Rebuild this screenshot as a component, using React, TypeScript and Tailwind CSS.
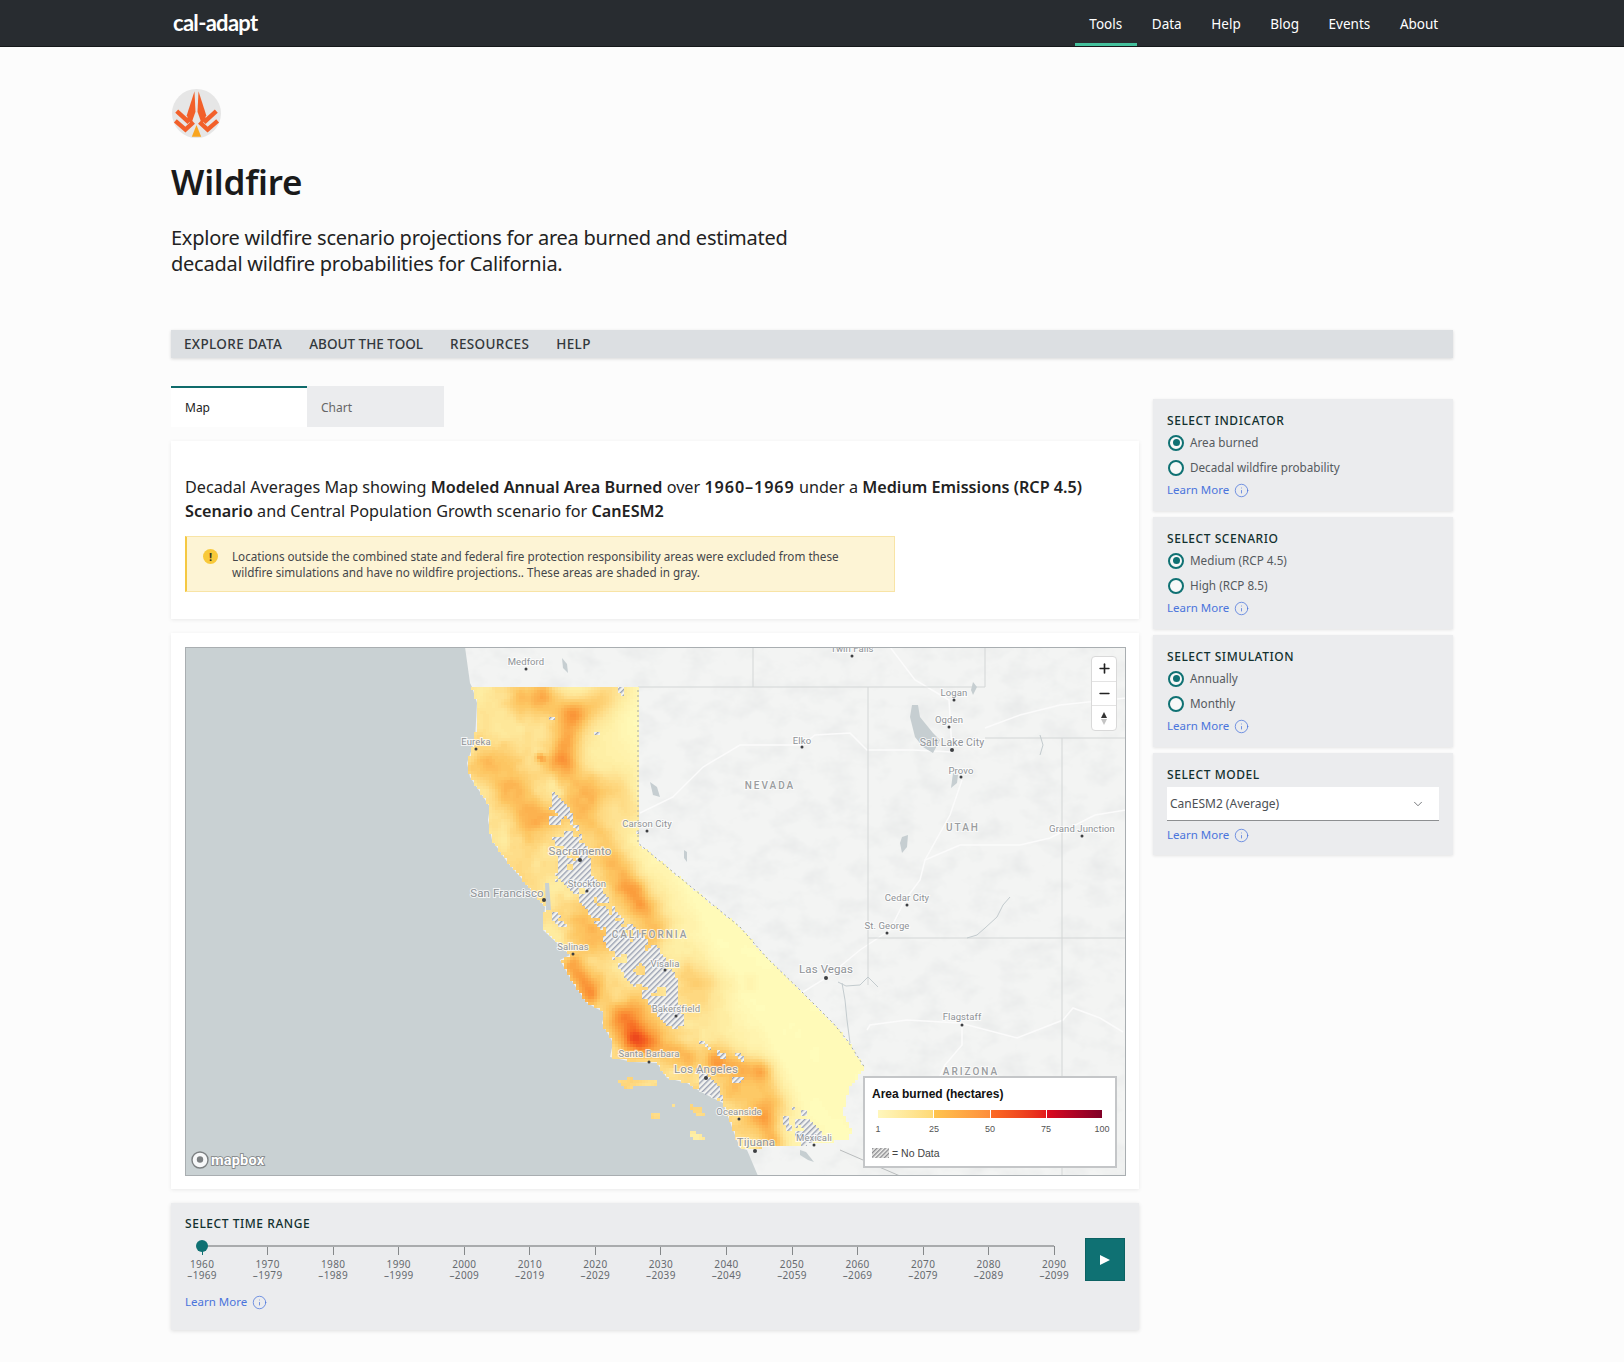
import { ChevronDown, Info, Minus, Plus } from "lucide-react";

type Pt = [number, number];

const californiaShape: Pt[] = [
  [472, 687], [638, 687], [638, 843], [667, 867], [707, 900], [740, 927], [767, 958], [800, 990], [833, 1023],
  [847, 1040], [865, 1068], [850, 1087], [843, 1113], [852, 1130], [847, 1140], [783, 1147], [740, 1148],
  [733, 1130], [723, 1103], [703, 1093], [687, 1083], [667, 1078], [657, 1063], [633, 1062], [610, 1057],
  [613, 1043], [602, 1023], [605, 1013], [587, 1003], [573, 983], [560, 960], [570, 955], [543, 930],
  [545, 907], [523, 880], [508, 863], [492, 840], [488, 820], [490, 807], [470, 777], [467, 763], [475, 740],
  [477, 703],
];

const islands: Pt[][] = [
  [[618, 1080], [630, 1078], [640, 1080], [657, 1079], [657, 1086], [635, 1086], [632, 1089], [625, 1089], [622, 1084], [618, 1084]],
  [[652, 1113], [660, 1113], [660, 1119], [652, 1119]],
  [[690, 1105], [703, 1108], [704, 1116], [698, 1116], [690, 1110]],
  [[690, 1128], [694, 1132], [704, 1137], [703, 1141], [696, 1141], [690, 1134]],
  [[672, 1105], [675, 1105], [675, 1108], [672, 1108]],
];

const hatchAreas: Pt[][] = [
  [
    [553, 790], [548, 827], [556, 845], [558, 868], [554, 880], [570, 888], [583, 905], [598, 927], [606, 947],
    [625, 977], [645, 1000], [665, 1023], [682, 1034], [686, 1023], [678, 1000], [678, 980], [660, 950],
    [645, 937], [622, 917], [610, 903], [604, 892], [590, 873], [592, 860], [578, 827], [566, 803],
  ],
  [[618, 687], [623, 687], [623, 697], [618, 697]],
  [[549, 716], [555, 716], [555, 721], [549, 721]],
  [[593, 727], [600, 727], [600, 734], [593, 734]],
  [[635, 830], [640, 830], [640, 843], [635, 843]],
  [[552, 910], [560, 915], [569, 928], [560, 928], [552, 920]],
  [[697, 1068], [712, 1078], [722, 1092], [722, 1100], [710, 1098], [699, 1090]],
  [[698, 1041], [704, 1041], [727, 1056], [724, 1060], [712, 1052]],
  [[735, 1052], [740, 1052], [746, 1062], [741, 1063]],
  [[725, 1078], [744, 1077], [738, 1084], [728, 1084]],
  [[783, 1117], [788, 1117], [792, 1130], [786, 1133]],
  [[795, 1120], [810, 1120], [823, 1133], [822, 1140], [803, 1146], [795, 1135]],
  [[792, 1106], [800, 1108], [810, 1114], [800, 1116], [792, 1112]],
];

const holes: { x: number; y: number; r: number }[] = [
  { x: 640, y: 970, r: 6 },
  { x: 662, y: 992, r: 5 },
  { x: 566, y: 822, r: 5 },
  { x: 577, y: 835, r: 3 },
  { x: 570, y: 868, r: 3 },
  { x: 625, y: 925, r: 3 },
];

const ridges: { pts: Pt[]; amp: number; r: number }[] = [
  { pts: [[522, 700], [552, 708]], amp: 0.18, r: 15 },
  { pts: [[543, 688], [543, 695]], amp: 0.18, r: 8 },
  { pts: [[597, 703], [612, 690]], amp: 0.2, r: 15 },
  { pts: [[572, 716], [562, 758]], amp: 0.36, r: 11 },
  { pts: [[578, 715], [600, 700]], amp: 0.12, r: 10 },
  { pts: [[540, 757], [542, 759]], amp: 0.3, r: 3 },
  { pts: [[500, 763], [533, 817]], amp: 0.26, r: 14 },
  { pts: [[560, 760], [575, 795]], amp: 0.1, r: 9 },
  { pts: [[600, 730], [625, 770]], amp: 0.08, r: 14 },
  { pts: [[592, 785], [593, 820], [617, 867], [637, 897], [657, 925]], amp: 0.24, r: 12 },
  { pts: [[620, 790], [632, 810]], amp: 0.16, r: 11 },
  { pts: [[637, 890], [640, 903]], amp: 0.18, r: 9 },
  { pts: [[580, 918], [600, 950]], amp: 0.2, r: 14 },
  { pts: [[572, 965], [590, 995]], amp: 0.36, r: 8 },
  { pts: [[625, 1020], [634, 1036]], amp: 0.5, r: 12 },
  { pts: [[635, 1040], [690, 1058]], amp: 0.28, r: 9 },
  { pts: [[690, 980], [705, 985]], amp: 0.2, r: 13 },
  { pts: [[732, 982], [732, 986]], amp: 0.05, r: 6 },
  { pts: [[750, 980], [750, 986]], amp: 0.06, r: 5 },
  { pts: [[717, 1062], [757, 1070]], amp: 0.28, r: 9 },
  { pts: [[765, 1075], [772, 1098]], amp: 0.2, r: 9 },
  { pts: [[735, 1090], [768, 1112]], amp: 0.22, r: 13 },
  { pts: [[762, 1118], [772, 1140]], amp: 0.3, r: 8 },
  { pts: [[640, 1000], [662, 1030]], amp: 0.08, r: 10 },
];

const colorStops: [number, number, number, number][] = [
  [0, 255, 252, 187],
  [0.2, 254, 229, 150],
  [0.4, 253, 198, 98],
  [0.6, 251, 157, 60],
  [0.8, 247, 108, 35],
  [1, 232, 56, 26],
];

function inside(p: Pt, poly: Pt[]) {
  let hit = false;
  for (let i = 0, j = poly.length - 1; i < poly.length; j = i++) {
    const [xi, yi] = poly[i];
    const [xj, yj] = poly[j];
    if (yi > p[1] !== yj > p[1] && p[0] < ((xj - xi) * (p[1] - yi)) / (yj - yi) + xi) hit = !hit;
  }
  return hit;
}

function segDist(p: Pt, a: Pt, b: Pt) {
  const dx = b[0] - a[0];
  const dy = b[1] - a[1];
  const t = Math.max(0, Math.min(1, ((p[0] - a[0]) * dx + (p[1] - a[1]) * dy) / (dx * dx + dy * dy)));
  return Math.hypot(p[0] - a[0] - t * dx, p[1] - a[1] - t * dy);
}

function hash(i: number, j: number) {
  const s = Math.sin(i * 127.1 + j * 311.7) * 43758.5453;
  return s - Math.floor(s);
}

// smooth lattice noise, 0..1
function vnoise(x: number, y: number) {
  const i = Math.floor(x);
  const j = Math.floor(y);
  const fx = x - i;
  const fy = y - j;
  const u = fx * fx * (3 - 2 * fx);
  const v = fy * fy * (3 - 2 * fy);
  const top = hash(i, j) * (1 - u) + hash(i + 1, j) * u;
  const bottom = hash(i, j + 1) * (1 - u) + hash(i + 1, j + 1) * u;
  return top * (1 - v) + bottom * v;
}

function heat(p: Pt) {
  const [x, y] = p;
  const edge = x - (650 + (y - 900) * 0.55);
  const t = Math.max(0, Math.min(1, (edge + 25) / 70));
  const base = 0.23 * (1 - t) + 0.012 * t;
  let v = base;
  for (const r of ridges) {
    let d = Infinity;
    for (let i = 0; i < r.pts.length - 1; i++) d = Math.min(d, segDist(p, r.pts[i], r.pts[i + 1]));
    v += r.amp * Math.exp(-(d * d) / (2 * r.r * r.r));
  }
  const noise = (vnoise(x / 24, y / 24) - 0.5) * 0.22 + (vnoise(x / 8, y / 8) - 0.5) * 0.09;
  return Math.max(0, Math.min(1, v + noise * (1 - t * 0.92)));
}

function colorFor(v: number) {
  for (let i = 1; i < colorStops.length; i++) {
    const a = colorStops[i - 1];
    const b = colorStops[i];
    if (v <= b[0]) {
      const k = (v - a[0]) / (b[0] - a[0]);
      return `rgb(${Math.round(a[1] + (b[1] - a[1]) * k)},${Math.round(a[2] + (b[2] - a[2]) * k)},${Math.round(a[3] + (b[3] - a[3]) * k)})`;
    }
  }
  return "rgb(232,56,26)";
}

function buildHeatmap() {
  const size = 3;
  const groups: Record<string, string> = {};
  let hatch = "";
  const shapes = [californiaShape, ...islands];
  for (let y = 684; y < 1152; y += size) {
    for (let x = 462; x < 870; x += size) {
      const p: Pt = [x + size / 2, y + size / 2];
      if (!shapes.some((s) => inside(p, s))) continue;
      const cell = `M${x} ${y}h${size}v${size}h-${size}z`;
      const hole = holes.some((h) => Math.hypot(p[0] - h.x, p[1] - h.y) < h.r) || vnoise(x / 7, y / 7) > 0.76;
      if (!hole && hatchAreas.some((s) => inside(p, s))) {
        hatch += cell;
        continue;
      }
      const level = Math.round(heat(p) * 60) / 60;
      const fill = colorFor(level);
      groups[fill] = (groups[fill] || "") + cell;
    }
  }
  return { groups: Object.entries(groups), hatch };
}

const heatmap = buildHeatmap();

const waterShape =
  "M185 647H465L470 683L472 687L477 703L475 740L467 763L470 777L490 807L488 820L492 840L508 863L523 880L545 907L543 930L570 955L560 960L573 983L587 1003L605 1013L602 1023L613 1043L610 1057L633 1062L657 1063L667 1078L687 1083L703 1093L723 1103L733 1130L740 1148L747 1150L758 1176H185Z";

const cityLabels: { name: string; x: number; y: number; dotX?: number; dotY?: number; size?: number; big?: boolean }[] = [
  { name: "Medford", x: 526, y: 665, dotY: 669 },
  { name: "Twin Falls", x: 852, y: 652, dotY: 656 },
  { name: "Logan", x: 954, y: 696, dotY: 700 },
  { name: "Ogden", x: 949, y: 723, dotY: 727 },
  { name: "Salt Lake City", x: 952, y: 746, dotY: 750, size: 10.5, big: true },
  { name: "Provo", x: 961, y: 774, dotY: 777 },
  { name: "Elko", x: 802, y: 744, dotY: 747 },
  { name: "Eureka", x: 476, y: 745, dotY: 749 },
  { name: "Grand Junction", x: 1082, y: 832, dotY: 836 },
  { name: "Carson City", x: 647, y: 827, dotY: 831 },
  { name: "Cedar City", x: 907, y: 901, dotY: 905 },
  { name: "St. George", x: 887, y: 929, dotY: 933 },
  { name: "Sacramento", x: 580, y: 855, dotY: 860, size: 11.5, big: true },
  { name: "Stockton", x: 587, y: 887, dotY: 891 },
  { name: "San Francisco", x: 507, y: 897, dotX: 544, dotY: 900, size: 11.5, big: true },
  { name: "Salinas", x: 573, y: 950, dotY: 954 },
  { name: "Visalia", x: 665, y: 967, dotY: 970 },
  { name: "Las Vegas", x: 826, y: 973, dotY: 978, size: 11.5, big: true },
  { name: "Bakersfield", x: 676, y: 1012, dotY: 1016 },
  { name: "Flagstaff", x: 962, y: 1020, dotY: 1025 },
  { name: "Santa Barbara", x: 649, y: 1057, dotY: 1062 },
  { name: "Los Angeles", x: 706, y: 1073, dotY: 1078, size: 11.5, big: true },
  { name: "Oceanside", x: 739, y: 1115, dotY: 1119 },
  { name: "Tijuana", x: 756, y: 1146, dotX: 755, dotY: 1151, size: 11.5, big: true },
  { name: "Mexicali", x: 814, y: 1141, dotY: 1145 },
];

const stateLabels: { name: string; x: number; y: number }[] = [
  { name: "NEVADA", x: 770, y: 789 },
  { name: "UTAH", x: 963, y: 831 },
  { name: "CALIFORNIA", x: 650, y: 938 },
  { name: "ARIZONA", x: 971, y: 1075 },
];

const decades = [1960, 1970, 1980, 1990, 2000, 2010, 2020, 2030, 2040, 2050, 2060, 2070, 2080, 2090];

const sections = [
  { title: "SELECT INDICATOR", options: ["Area burned", "Decadal wildfire probability"] },
  { title: "SELECT SCENARIO", options: ["Medium (RCP 4.5)", "High (RCP 8.5)"] },
  { title: "SELECT SIMULATION", options: ["Annually", "Monthly"] },
];

const navItems = ["Tools", "Data", "Help", "Blog", "Events", "About"];

function LearnMore() {
  return (
    <a className="flex items-center gap-[5px] text-[11.5px] leading-[18px] text-[#4a74dc]">
      Learn More
      <Info size={15} strokeWidth={1.2} />
    </a>
  );
}

function Radio({ label, checked }: { label: string; checked?: boolean }) {
  return (
    <label className="flex h-[25px] items-center gap-[6px] pl-[1px]">
      <span className="flex h-[16px] w-[16px] items-center justify-center rounded-full border-2 border-[#0f7173] bg-[#f7f8f8]">
        {checked && <span className="h-[7px] w-[7px] rounded-full bg-[#0f7173]" />}
      </span>
      <span className="text-[11.7px] text-[#555a5e]">{label}</span>
    </label>
  );
}

function PanelTitle({ children }: { children: string }) {
  return <h3 className="text-[12px] leading-[16px] font-medium tracking-[0.55px] text-[#12302e]">{children}</h3>;
}

function WildfireIcon() {
  return (
    <svg viewBox="516 267 146 146" className="ml-[1px] h-[49px] w-[49px]">
      <circle cx="589" cy="340" r="73" fill="#e6e6e6" />
      <path d="M583 274L586 335L572 374L560 345Z" fill="#f2602a" />
      <path d="M595 274L592 335L606 374L618 345Z" fill="#f2602a" />
      <path d="M530 333L562 362L574 350M526 362L556 388L580 366" fill="none" stroke="#f2602a" strokeWidth="13" />
      <path d="M648 333L616 362L604 350M652 362L622 388L598 366" fill="none" stroke="#f2602a" strokeWidth="13" />
      <path d="M589 374L603 409H575Z" fill="#f9a51f" />
    </svg>
  );
}

function MapDrawing() {
  return (
    <svg viewBox="185 647 941 529" className="absolute inset-0 h-full w-full font-['Roboto']">
      <defs>
        <filter id="terrain" x="0" y="0" width="100%" height="100%">
          <feTurbulence type="fractalNoise" baseFrequency="0.035 0.05" numOctaves="4" seed="7" />
          <feColorMatrix values="0 0 0 0 0.68  0 0 0 0 0.7  0 0 0 0 0.71  0 0 0 0.7 -0.3" />
        </filter>
        <pattern id="hatch" width="4" height="4" patternUnits="userSpaceOnUse" patternTransform="rotate(45)">
          <rect width="4" height="4" fill="#f3f3f0" />
          <rect width="1.4" height="4" fill="#9aa1b2" />
        </pattern>
        <pattern id="hatch-legend" width="3" height="3" patternUnits="userSpaceOnUse" patternTransform="rotate(45)">
          <rect width="3" height="3" fill="#f1f1ee" />
          <rect width="1.4" height="3" fill="#8c8c90" />
        </pattern>
      </defs>

      <rect x="185" y="647" width="941" height="529" fill="#f3f4f3" />
      <rect x="185" y="647" width="941" height="529" filter="url(#terrain)" />

      <g fill="none" stroke="#fbfbfb" strokeWidth="1.5">
        <path d="M640 813L673 797L703 767L740 745L802 745L815 735L850 733L867 750L913 750L952 752" />
        <path d="M962 780L950 815L925 860L920 880L905 900L890 930L860 950L826 978L790 1000" />
        <path d="M925 860L960 845L1020 845L1050 838L1095 815L1126 810" />
        <path d="M867 1030L870 1025L907 1020L960 1023L1017 1038L1063 1020L1073 1008L1100 1018L1123 1032" />
        <path d="M962 1025L962 1045L945 1065L940 1076" />
        <path d="M890 647L915 680L949 700L952 750M985 728L1020 715L1060 705L1126 698" />
      </g>

      <g fill="none" stroke="#d3d6d6" strokeWidth="1">
        <path d="M638 687H985V647M753 647V687M985 738H1126M868 687V985M868 938H1126M1062 738V1176" />
        <path d="M840 1150L863 1160L900 1176" stroke="#b9bcbd" />
      </g>

      <g fill="#c6ced1">
        <path d="M912 705L918 705L920 717L933 733L940 740L933 753L923 747L915 737L910 717Z" />
        <path d="M953 773L958 775L957 783L951 788Z" />
        <path d="M973 682L977 687L973 695L971 690Z" />
        <path d="M902 837L908 835L907 847L902 853L900 843Z" />
        <path d="M650 782L657 787L660 797L653 795Z" />
        <path d="M562 658L567 664L568 673L563 668Z" />
        <path d="M684 850L687 852L687 862L684 858Z" />
        <path d="M800 1150L806 1152L814 1162L808 1160L800 1155Z" />
      </g>
      <g fill="none" stroke="#c3cbce" strokeWidth="1">
        <path d="M838 982L846 986L860 985L868 977L878 987M842 983L845 1000L847 1020L850 1043" />
        <path d="M967 938L977 935L985 928L997 917L1003 905L1010 897" />
        <path d="M1040 735L1043 745L1040 755" />
      </g>

      <path d={waterShape} fill="#c9d1d3" />

      {heatmap.groups.map(([fill, d]) => (
        <path key={fill} d={d} fill={fill} />
      ))}
      <path d={heatmap.hatch} fill="url(#hatch)" />
      <path d="M545 883L549 883L551 910L546 910Z" fill="#c9d1d3" />
      <path
        d="M638 690V843L667 867L707 900L740 927L767 958L800 990L833 1023L847 1040L865 1068"
        fill="none"
        stroke="#a3a8a8"
        strokeWidth="1"
        strokeDasharray="2 3"
      />

      {cityLabels.map((c) => (
        <g key={c.name}>
          <text
            x={c.x}
            y={c.y}
            textAnchor="middle"
            fontSize={c.size ?? 9.5}
            letterSpacing="0.1"
            fill="#8e9296"
            stroke="#ffffff"
            strokeOpacity="0.75"
            strokeWidth="2"
            paintOrder="stroke"
          >
            {c.name}
          </text>
          <circle cx={c.dotX ?? c.x} cy={c.dotY} r={c.big ? 2 : 1.5} fill="#3d3f42" />
        </g>
      ))}
      {stateLabels.map((s) => (
        <text
          key={s.name}
          x={s.x}
          y={s.y}
          textAnchor="middle"
          fontSize="10"
          fontWeight="500"
          letterSpacing="2"
          fill="#9a9da0"
          stroke="#ffffff"
          strokeOpacity="0.7"
          strokeWidth="2"
          paintOrder="stroke"
        >
          {s.name}
        </text>
      ))}

      <circle cx="200" cy="1160" r="8" fill="#ffffff" fillOpacity="0.85" stroke="#7c8082" strokeWidth="1.4" />
      <circle cx="200" cy="1159.5" r="3.2" fill="#7c8082" />
      <text
        x="211"
        y="1165"
        fontSize="14.5"
        fontWeight="700"
        letterSpacing="0.2"
        fill="#ffffff"
        stroke="#7c8082"
        strokeWidth="1.6"
        paintOrder="stroke"
      >
        mapbox
      </text>
    </svg>
  );
}

function MapLegend() {
  return (
    <div className="absolute top-[429px] left-[678px] h-[92px] w-[254px] border-2 border-[#c4c6c8] bg-white px-[7px] font-['Liberation_Sans',sans-serif]">
      <div className="mt-[8px] text-[12px] leading-[16px] font-bold text-[#111]">Area burned (hectares)</div>
      <div className="mt-[8px] ml-[6px] flex h-[8px] w-[224px] gap-[1px]">
        <span className="flex-1 bg-gradient-to-r from-[#fff7bc] to-[#fed976]" />
        <span className="flex-1 bg-gradient-to-r from-[#fec44f] to-[#fd8d3c]" />
        <span className="flex-1 bg-gradient-to-r from-[#fc6a24] to-[#e31a1c]" />
        <span className="flex-1 bg-gradient-to-r from-[#dc0a1e] to-[#800026]" />
      </div>
      <div className="mt-[6px] ml-[6px] flex w-[224px] justify-between text-[9px] leading-[11px] text-[#555]">
        {["1", "25", "50", "75", "100"].map((n) => (
          <span key={n} className="flex w-0 justify-center">
            {n}
          </span>
        ))}
      </div>
      <div className="mt-[12px] flex items-center gap-[3px] text-[10.5px] leading-[12px] text-[#444]">
        <svg width="17" height="10">
          <rect width="17" height="10" fill="url(#hatch-legend)" />
        </svg>
        = No Data
      </div>
    </div>
  );
}

export default function App() {
  return (
    <div className="min-h-[1362px] bg-[#fcfcfc] pb-[32px] font-['Noto_Sans',sans-serif] text-[#161616]">
      <header className="h-[47px] border-b border-[#15181a] bg-[#282c30]">
        <div className="mx-auto flex h-full w-[1282px] items-center justify-between">
          <span className="ml-[2px] pb-[2px] font-['Lato',sans-serif] text-[22px] font-bold tracking-[-0.7px] text-white">cal-adapt</span>
          <nav className="flex h-full">
            {navItems.map((item, i) => (
              <a
                key={item}
                className={`flex h-[46px] items-center px-[14.8px] text-[13.5px] text-white ${
                  i === 0 ? "border-b-[3px] border-[#44c09c] pt-[5px]" : "pt-[2px]"
                }`}
              >
                {item}
              </a>
            ))}
          </nav>
        </div>
      </header>

      <main className="mx-auto w-[1282px]">
        <div className="pt-[42px]">
          <WildfireIcon />
        </div>
        <h1 className="mt-[22px] text-[35px] leading-[44px] font-semibold tracking-[-0.2px] text-[#1a1a1a]">Wildfire</h1>
        <p className="mt-[21px] text-[20px] leading-[26px] tracking-[-0.25px] text-[#222]">
          Explore wildfire scenario projections for area burned and estimated
          <br />
          decadal wildfire probabilities for California.
        </p>

        <nav className="mt-[53px] flex h-[28px] items-center gap-[27px] bg-[#dcdfe2] px-[13px] text-[13.5px] font-medium tracking-[0.35px] text-[#33383c] shadow-[0_1px_3px_rgba(0,0,0,0.15)]">
          <a>EXPLORE DATA</a>
          <a className="tracking-normal">ABOUT THE TOOL</a>
          <a>RESOURCES</a>
          <a>HELP</a>
        </nav>

        <div className="mt-[28px] flex items-start gap-[14px]">
          <div className="w-[968px]">
            <div className="flex h-[41px] text-[12px]">
              <div className="flex w-[136px] items-center border-t-2 border-[#0f6b6b] bg-white pl-[14px] text-[#222]">Map</div>
              <div className="flex w-[137px] items-center border-t-2 border-transparent bg-[#ebecee] pl-[14px] text-[#666]">Chart</div>
            </div>

            <section className="mt-[14px] h-[178px] bg-white px-[14px] pt-[34px] shadow-[0_1px_4px_rgba(0,0,0,0.08)]">
              <p className="text-[16.2px] leading-[24px] text-[#222]">
                Decadal Averages Map showing <b className="font-semibold">Modeled Annual Area Burned</b> over{" "}
                <b className="font-semibold tracking-[0.9px]">1960–1969</b> under a{" "}
                <b className="font-semibold">Medium Emissions (RCP 4.5)</b>
                <br />
                <b className="font-semibold">Scenario</b> and Central Population Growth scenario for{" "}
                <b className="font-semibold">CanESM2</b>
              </p>
              <div className="mt-[13px] flex h-[56px] w-[710px] items-start gap-[14px] border border-l-2 border-[#f8e4a6] border-l-[#f5c842] bg-[#fdf4d5] pt-[11px] pl-[16px]">
                <span className="mt-[1px] flex h-[15px] w-[15px] shrink-0 items-center justify-center rounded-full bg-[#f8c93a] text-[11px] leading-none font-bold text-[#3a3320]">
                  !
                </span>
                <p className="text-[11.7px] leading-[16px] text-[#44464a]">
                  Locations outside the combined state and federal fire protection responsibility areas were excluded from these
                  <br />
                  wildfire simulations and have no wildfire projections.. These areas are shaded in gray.
                </p>
              </div>
            </section>

            <section className="mt-[14px] h-[556px] bg-white p-[14px] shadow-[0_1px_4px_rgba(0,0,0,0.08)]">
              <div className="relative h-[529px] w-[941px] overflow-hidden">
                <MapDrawing />
                <div className="absolute inset-0 border border-[#a9aeb1]" />
                <div className="absolute top-[9px] left-[906px] flex h-[75px] w-[26px] flex-col items-center rounded-[4px] border border-[#d9d9d9] bg-white text-[#222]">
                  <span className="flex h-[25px] w-full items-center justify-center border-b border-[#e3e3e3]">
                    <Plus size={15} strokeWidth={2.6} />
                  </span>
                  <span className="flex h-[25px] w-full items-center justify-center border-b border-[#e3e3e3]">
                    <Minus size={15} strokeWidth={2.6} />
                  </span>
                  <span className="flex h-[24px] w-full flex-col items-center justify-center gap-[1px]">
                    <span className="h-0 w-0 border-x-[3.5px] border-b-[6px] border-x-transparent border-b-[#333]" />
                    <span className="h-0 w-0 border-x-[3.5px] border-t-[6px] border-x-transparent border-t-[#c4c4c4]" />
                  </span>
                </div>
                <MapLegend />
              </div>
            </section>

            <section className="mt-[14px] h-[127px] bg-[#ebecee] pt-[13px] pl-[14px] shadow-[0_1px_4px_rgba(0,0,0,0.12)]">
              <PanelTitle>SELECT TIME RANGE</PanelTitle>
              <div className="flex">
                <div className="relative mt-[13px] ml-[-15.7px] w-[916px]">
                  <div className="absolute top-[0px] left-[32.7px] h-[2px] w-[852px] bg-[#a9abad]" />
                  <div className="absolute top-[-5px] left-[26.7px] h-[12px] w-[12px] rounded-full bg-[#0f7173]" />
                  <div className="grid grid-cols-[repeat(14,65.55px)] pt-[1px]">
                    {decades.map((d) => (
                      <div key={d} className="flex flex-col items-center text-[10px] leading-[10.5px] tracking-[0.35px] text-[#666a6e]">
                        <span className={`h-[9px] w-px ${d === 1960 ? "bg-[#0f7173]" : "bg-[#85888a]"}`} />
                        <span className="mt-[4px]">{d}</span>
                        <span>–{d + 9}</span>
                      </div>
                    ))}
                  </div>
                </div>
                <button className="mt-[6px] flex h-[43px] w-[40px] items-center justify-center border border-[#0c6263] bg-[#0f7173]">
                  <span className="h-0 w-0 border-y-[5.5px] border-l-[10px] border-y-transparent border-l-white" />
                </button>
              </div>
              <div className="mt-[12px]">
                <LearnMore />
              </div>
            </section>
          </div>

          <aside className="mt-[13px] flex w-[300px] flex-col gap-[6px]">
            {sections.map((s) => (
              <div key={s.title} className="h-[112px] bg-[#ebecee] px-[14px] pt-[14px] shadow-[0_1px_3px_rgba(0,0,0,0.1)]">
                <PanelTitle>{s.title}</PanelTitle>
                <div className="pt-[1px]">
                  {s.options.map((o, i) => (
                    <Radio key={o} label={o} checked={i === 0} />
                  ))}
                </div>
                <div className="mt-[1px]">
                  <LearnMore />
                </div>
              </div>
            ))}
            <div className="h-[102px] bg-[#ebecee] px-[14px] pt-[14px] shadow-[0_1px_3px_rgba(0,0,0,0.1)]">
              <PanelTitle>SELECT MODEL</PanelTitle>
              <div className="mt-[4px] flex h-[34px] items-center justify-between border-b border-[#8d8f91] bg-white pr-[14px] pl-[3px] text-[12px] text-[#4c5054]">
                CanESM2 (Average)
                <ChevronDown size={14} strokeWidth={1.3} />
              </div>
              <div className="mt-[5px]">
                <LearnMore />
              </div>
            </div>
          </aside>
        </div>
      </main>
    </div>
  );
}
